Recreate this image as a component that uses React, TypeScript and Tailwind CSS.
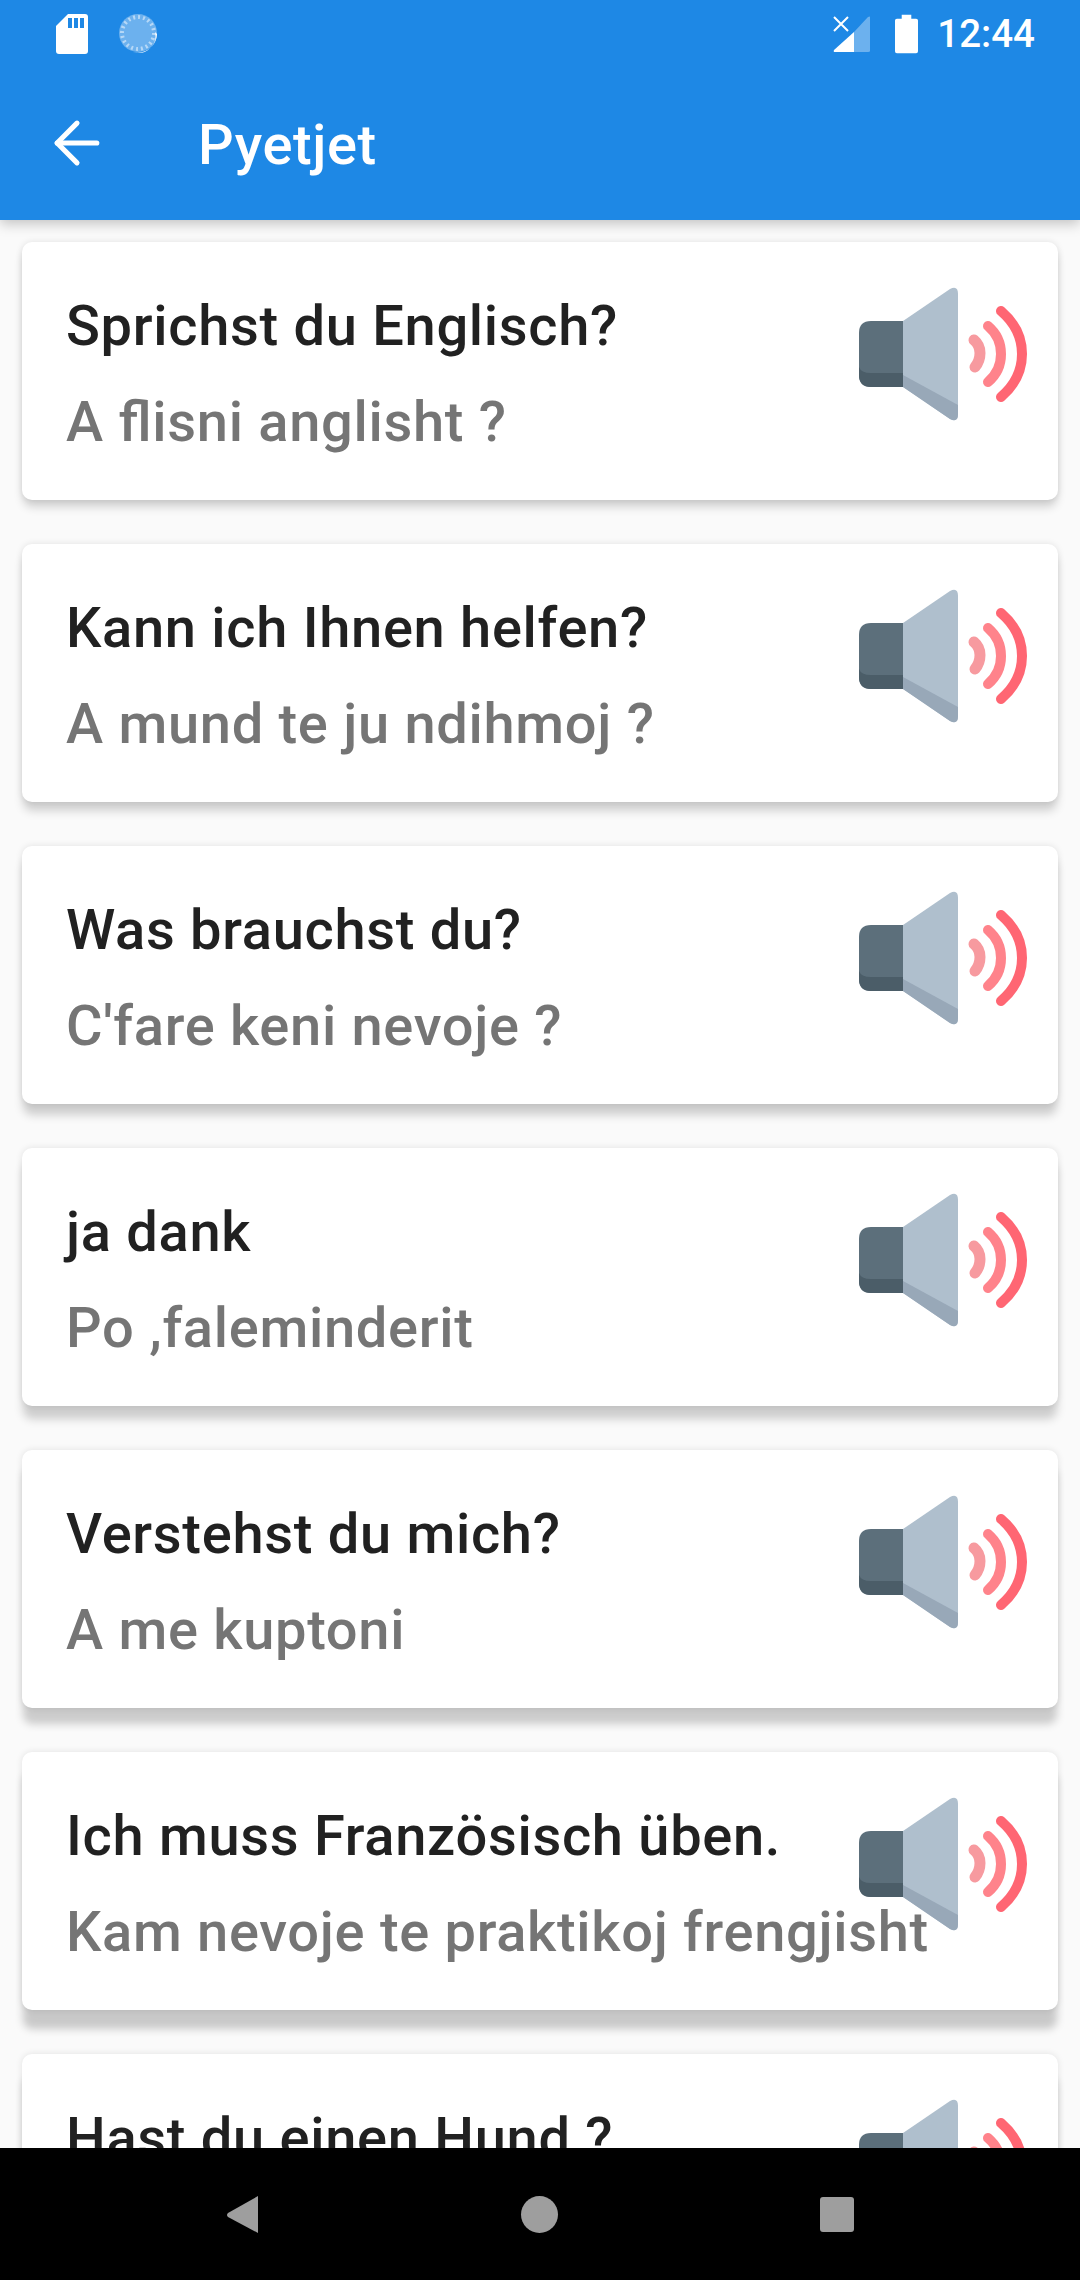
import { ArrowLeft } from "lucide-react";

// the shadow gets longer further down the screen, like elevation under a top light
const rows = [
  ["Sprichst du Englisch?", "A flisni anglisht ?", "shadow-[0_8px_10px_-1px_rgba(0,0,0,0.16),0_0_7px_rgba(0,0,0,0.1)]"],
  ["Kann ich Ihnen helfen?", "A mund te ju ndihmoj ?", "shadow-[0_10px_10px_-1px_rgba(0,0,0,0.17),0_0_7px_rgba(0,0,0,0.1)]"],
  ["Was brauchst du?", "C'fare keni nevoje ?", "shadow-[0_12px_10px_-1px_rgba(0,0,0,0.18),0_0_7px_rgba(0,0,0,0.1)]"],
  ["ja dank", "Po ,faleminderit", "shadow-[0_14px_10px_-1px_rgba(0,0,0,0.18),0_0_7px_rgba(0,0,0,0.1)]"],
  ["Verstehst du mich?", "A me kuptoni", "shadow-[0_17px_9px_-1px_rgba(0,0,0,0.19),0_0_7px_rgba(0,0,0,0.1)]"],
  ["Ich muss Französisch üben.", "Kam nevoje te praktikoj frengjisht", "shadow-[0_20px_8px_-1px_rgba(0,0,0,0.2),0_0_7px_rgba(0,0,0,0.1)]"],
  ["Hast du einen Hund ?", "A keni qen ?", "shadow-[0_22px_8px_-1px_rgba(0,0,0,0.2),0_0_7px_rgba(0,0,0,0.1)]"],
];

const Speaker = () => (
  <svg viewBox="0 0 168 134" className="absolute right-[31px] top-[45px] w-[168px] h-[134px]">
    <path d="M12 34h32v66H12q-12 0-12-12V46q0-12 12-12z" fill="#5c6f7b" />
    <path d="M0 80v8q0 12 12 12h32V86H12Q2 86 0 80z" fill="#4b5d68" />
    <path d="M44 34L91 2q8-4 8 5v120q0 9-8 5L44 100z" fill="#afbfcd" />
    <path d="M44 88L99 118v9q0 9-8 5L44 100z" fill="#98a8b8" />
    <path d="M115 53q6 5 6 13t-5 14" fill="none" stroke="#f79a9f" strokeWidth="11" strokeLinecap="round" />
    <path d="M129 39q13 11 13 28t-13 28" fill="none" stroke="#ff838b" strokeWidth="10" strokeLinecap="round" />
    <path d="M142 24q21 18 21 43t-21 43" fill="none" stroke="#ff6673" strokeWidth="10" strokeLinecap="round" />
  </svg>
);

const Card = ({ title, sub, shadow }: { title: string; sub: string; shadow: string }) => (
  <div className={`relative shrink-0 h-[258px] rounded-[10px] bg-white pl-[44px] pt-[52px] ${shadow}`}>
    <div className="text-[56px] leading-[64px] font-medium tracking-[0.7px] [font-feature-settings:'liga'_1] text-[#212121] whitespace-nowrap">{title}</div>
    <div className="mt-[32px] text-[56px] leading-[64px] font-medium tracking-[0.7px] [font-feature-settings:'liga'_1] text-[#757575] whitespace-nowrap">{sub}</div>
    <Speaker />
  </div>
);

export default function App() {
  return (
    <div className="h-[2280px] w-[1080px] flex flex-col overflow-hidden bg-[#fafafa] font-['Roboto',sans-serif]">
      <div className="relative z-10 h-[220px] shrink-0 bg-[#1e88e5] text-white shadow-[0_4px_12px_rgba(0,0,0,0.22)]">
        <div className="h-[66px] flex items-center pl-[56px] pr-[45px] pt-[2px]">
          <svg viewBox="0 0 32 40" className="w-[32px] h-[40px]">
            <path d="M12 0h17q3 0 3 3v34q0 3-3 3H3q-3 0-3-3V12z" fill="#fff" />
            <path d="M12 4h4v10h-4zM18 4h4v10h-4zM24 4h4v10h-4z" fill="#1e88e5" />
          </svg>
          <svg viewBox="0 0 40 40" className="ml-[31px] w-[40px] h-[40px]">
            <circle cx="19" cy="19" r="19" fill="#fff" opacity="0.35" />
            <circle cx="19" cy="19" r="16" fill="none" stroke="#fff" strokeWidth="4" strokeDasharray="2 3" opacity="0.5" />
            <path d="M38 20a19 19 0 0 1-24 18a17 17 0 0 0 22-20z" fill="#fff" />
          </svg>
          <div className="ml-auto flex items-center">
            <svg viewBox="0 0 38 38" className="w-[38px] h-[38px]">
              <path d="M37 2v34q0 1-2 1H21V17L35 2q2-1 2 0z" fill="#fff" opacity="0.35" />
              <path d="M21 17v20H2q-2 0-1-2z" fill="#fff" />
              <path d="M1 2l14 14M15 2L1 16" stroke="#fff" strokeWidth="2" />
            </svg>
            <svg viewBox="0 0 24 40" className="ml-[24px] w-[23px] h-[40px]">
              <path d="M7 0h10v4h5q2 0 2 2v32q0 2-2 2H2q-2 0-2-2V6q0-2 2-2h5z" fill="#fff" />
            </svg>
            <span className="ml-[19px] text-[38.5px] leading-[44px] font-medium">12:44</span>
          </div>
        </div>
        <div className="h-[154px] flex items-center pl-[43px]">
          <ArrowLeft size={68} strokeWidth={1.8} />
          <span className="ml-[87px] mt-[3px] text-[56px] leading-[64px] font-medium tracking-[0.6px]">Pyetjet</span>
        </div>
      </div>
      <div className="flex-1 min-h-0 overflow-hidden flex flex-col gap-[44px] pt-[22px] px-[22px]">
        {rows.map((r) => (
          <Card key={r[0]} title={r[0]} sub={r[1]} shadow={r[2]} />
        ))}
      </div>
      <div className="relative z-10 h-[132px] shrink-0 bg-black flex items-center pl-[226px]">
        <svg viewBox="0 0 32 37" className="w-[32px] h-[37px]">
          <path d="M32 0v37L2 21q-2-2 0-4z" fill="#9e9e9e" />
        </svg>
        <div className="ml-[263px] w-[37px] h-[37px] rounded-full bg-[#9e9e9e]" />
        <div className="ml-[262px] w-[34px] h-[35px] rounded-[3px] bg-[#9e9e9e]" />
      </div>
    </div>
  );
}
